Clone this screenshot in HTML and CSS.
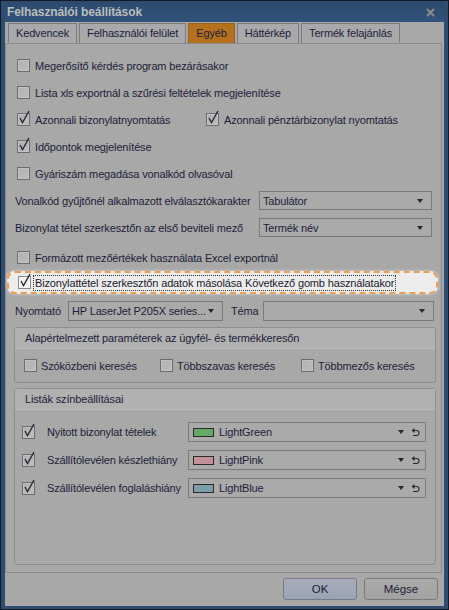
FILE: index.html
```html
<!DOCTYPE html>
<html>
<head>
  <title>Felhasználói beállítások</title>
  <link rel="stylesheet" href="styles.css">
</head>
<body>

  <div class="window">
    <div class="titlebar">
      <span class="title">Felhasználói beállítások</span>
      <svg class="close" width="9" height="9" viewBox="0 0 9 9"><path d="M1 1 L8 8 M8 1 L1 8" stroke="#8d8d8d" stroke-width="2"/></svg>
    </div>

    <div class="client">
      <div class="tabs">
        <div class="tab">Kedvencek</div>
        <div class="tab">Felhasználói felület</div>
        <div class="tab active">Egyéb</div>
        <div class="tab">Háttérkép</div>
        <div class="tab">Termék felajánlás</div>
      </div>

      <div class="tabpanel">
        <div class="row"><span class="cb"></span>Megerősítő kérdés program bezárásakor</div>
        <div class="row"><span class="cb"></span>Lista xls exportnál a szűrési feltételek megjelenítése</div>
        <div class="row">
          <div class="col"><span class="cb checked"></span>Azonnali bizonylatnyomtatás</div>
          <div class="col"><span class="cb checked"></span>Azonnali pénztárbizonylat nyomtatás</div>
        </div>
        <div class="row"><span class="cb checked"></span>Időpontok megjelenítése</div>
        <div class="row"><span class="cb"></span>Gyáriszám megadása vonalkód olvasóval</div>
        <div class="row field">
          <span class="flabel">Vonalkód gyűjtőnél alkalmazott elválasztókarakter</span>
          <div class="select wide">Tabulátor<span class="arrow"></span></div>
        </div>
        <div class="row field">
          <span class="flabel">Bizonylat tétel szerkesztőn az első beviteli mező</span>
          <div class="select wide">Termék név<span class="arrow"></span></div>
        </div>
        <div class="row gap-top"><span class="cb"></span>Formázott mezőértékek használata Excel exportnál</div>

        <div class="highlight">
          <span class="cb checked"></span><span class="focus">Bizonylattétel szerkesztőn adatok másolása Következő gomb használatakor</span>
        </div>

        <div class="row printer">
          <span class="plabel">Nyomtató</span>
          <div class="select printer-sel">HP LaserJet P205X series...<span class="arrow"></span></div>
          <span class="tlabel">Téma</span>
          <div class="select theme-sel"><span class="arrow"></span></div>
        </div>

        <div class="group search">
          <div class="group-head">Alapértelmezett paraméterek az ügyfél- és termékkeresőn</div>
          <div class="group-body">
            <div class="opt opt1"><span class="cb"></span>Szóközbeni keresés</div>
            <div class="opt opt2"><span class="cb"></span>Többszavas keresés</div>
            <div class="opt"><span class="cb"></span>Többmezős keresés</div>
          </div>
        </div>

        <div class="group colors">
          <div class="group-head">Listák színbeállításai</div>
          <div class="color-rows">
            <div class="color-row">
              <span class="cb checked"></span><span class="clabel">Nyitott bizonylat tételek</span>
              <div class="select color-sel"><span class="swatch green"></span>LightGreen<span class="arrow"></span>
                <svg class="reset" width="9" height="9" viewBox="0 0 9 9"><path d="M0.5 2.5 L3.5 0 V5 Z" fill="#2a2a35"/><path d="M3 2.5 H5.5 A2.5 2.5 0 0 1 5.5 7.5 H2" stroke="#2a2a35" stroke-width="1.1" fill="none"/></svg>
              </div>
            </div>
            <div class="color-row">
              <span class="cb checked"></span><span class="clabel">Szállítólevélen készlethiány</span>
              <div class="select color-sel"><span class="swatch pink"></span>LightPink<span class="arrow"></span>
                <svg class="reset" width="9" height="9" viewBox="0 0 9 9"><path d="M0.5 2.5 L3.5 0 V5 Z" fill="#2a2a35"/><path d="M3 2.5 H5.5 A2.5 2.5 0 0 1 5.5 7.5 H2" stroke="#2a2a35" stroke-width="1.1" fill="none"/></svg>
              </div>
            </div>
            <div class="color-row">
              <span class="cb checked"></span><span class="clabel">Szállítólevélen foglaláshiány</span>
              <div class="select color-sel"><span class="swatch blue"></span>LightBlue<span class="arrow"></span>
                <svg class="reset" width="9" height="9" viewBox="0 0 9 9"><path d="M0.5 2.5 L3.5 0 V5 Z" fill="#2a2a35"/><path d="M3 2.5 H5.5 A2.5 2.5 0 0 1 5.5 7.5 H2" stroke="#2a2a35" stroke-width="1.1" fill="none"/></svg>
              </div>
            </div>
          </div>
        </div>
      </div>

      <div class="buttons">
        <button class="btn default">OK</button>
        <button class="btn">Mégse</button>
      </div>
    </div>
  </div>

  <script>
    // draw the check marks into every checked box
    document.querySelectorAll(".cb.checked").forEach(box => {
      box.innerHTML = '<svg class="tick" width="14" height="16" viewBox="0 0 14 16"><path d="M3 9 L5.5 13.5 L12 2" stroke="#2a2a32" stroke-width="1.4" fill="none"/></svg>';
    });
  </script>

</body>
</html>
```

FILE: styles.css
```css
body {
  margin: 0;
  font-family: 'Liberation Sans', Arial, sans-serif;
  font-size: 11px;
  letter-spacing: -0.15px;
  color: #1d1d38;
  white-space: nowrap;
}
.window {
  width: 449px;
  height: 610px;
  box-sizing: border-box;
  background: #2f4d70;
  border: 1px solid #131a25;
  padding: 0 4px 3px 4px;
  display: flex;
  flex-direction: column;
}
.titlebar {
  height: 21px;
  display: flex;
  align-items: center;
  justify-content: space-between;
  padding: 0 9px 0 2px;
  background: linear-gradient(to bottom, #2c4a6c, #31537a);
}
.title {
  font-weight: bold;
  font-size: 12px;
  letter-spacing: -0.1px;
  color: #bcbcbc;
}
.close {
  margin-top: 1px;
}
.client {
  flex: 1;
  background: #a8a8a8;
  display: flex;
  flex-direction: column;
  padding-top: 1px;
}
.tabs {
  display: flex;
  gap: 2px;
  padding-left: 3px;
  height: 20px;
}
.tab {
  border: 1px solid #7c7c7f;
  border-bottom: none;
  padding: 0 7px;
  line-height: 19px;
  background: #a9a9ac;
}
.tab.active {
  background: #b6711f;
  border-color: #9a6020;
}
.tabpanel {
  height: 530px;
  box-sizing: border-box;
  margin-right: 2px;
  border: 1px solid #8b8b8b;
  padding: 8px 0 0 0;
}
.row {
  height: 27px;
  display: flex;
  align-items: center;
  padding-left: 11px;
}
.row.gap-top {
  margin-top: 3px;
}
.col {
  display: flex;
  align-items: center;
  width: 189px;
}
.cb {
  position: relative;
  width: 11px;
  height: 11px;
  border: 1px solid #6c6c6e;
  background: linear-gradient(to bottom right, #b0b0b2, #bdbdbf);
  box-shadow: inset 0 0 0 1px #c2c2c4;
  margin-right: 5px;
  flex: none;
}
.tick {
  position: absolute;
  left: -1px;
  top: -5px;
}
.field {
  padding-left: 9px;
}
.flabel {
  width: 244px;
}
.select {
  position: relative;
  height: 18px;
  box-sizing: border-box;
  border: 1px solid #7a7a7c;
  background: #aaaaab;
  display: flex;
  align-items: center;
  padding-left: 3px;
}
.arrow {
  position: absolute;
  right: 8px;
  top: 7px;
  border-left: 3.5px solid transparent;
  border-right: 3.5px solid transparent;
  border-top: 4px solid #26262e;
}
.select.wide {
  width: 173px;
  height: 19px;
}
.highlight {
  height: 23px;
  box-sizing: border-box;
  margin: 0 3px 0 1px;
  border: 2px dashed #ef9d4e;
  border-radius: 8px;
  background: #ededed;
  box-shadow: 0 0 3px rgba(255, 255, 255, 0.6);
  display: flex;
  align-items: center;
  padding-left: 9px;
  color: #1a1a2a;
}
.highlight .cb {
  background: #f4f4f4;
  box-shadow: none;
  border-color: #8a8a8a;
  margin-right: 3px;
}
.focus {
  outline: 1px dotted #333;
  padding: 0 1px;
  line-height: 14px;
}
.printer {
  margin-top: 3px;
  padding-left: 9px;
}
.plabel {
  width: 53px;
}
.printer-sel {
  width: 155px;
  height: 20px;
}
.tlabel {
  margin-left: 8px;
  width: 32px;
}
.theme-sel {
  width: 171px;
  height: 20px;
}
.group {
  margin: 3px 0 0 8px;
  width: 422px;
  box-sizing: border-box;
  border: 1px solid #8e8e8e;
  border-radius: 3px;
}
.group-head {
  height: 20px;
  line-height: 20px;
  padding-left: 10px;
  background: #b1b1b2;
  border-bottom: 1px solid #bcbcbc;
}
.search {
  height: 56px;
}
.group-body {
  display: flex;
  align-items: center;
  height: 33px;
  padding-left: 9px;
}
.opt {
  display: flex;
  align-items: center;
}
.opt .cb {
  margin-right: 4px;
}
.opt1 {
  width: 136px;
}
.opt2 {
  width: 141px;
}
.colors {
  margin-top: 5px;
  height: 177px;
}
.color-rows {
  padding: 8px 0 0 7px;
}
.color-row {
  height: 28px;
  display: flex;
  align-items: center;
}
.color-row .cb {
  margin-right: 12px;
}
.clabel {
  width: 141px;
}
.color-sel {
  width: 238px;
  height: 20px;
  padding-left: 4px;
}
.color-sel .arrow {
  right: 21px;
}
.reset {
  position: absolute;
  right: 5px;
  top: 5px;
}
.swatch {
  width: 19px;
  height: 7px;
  border: 1px solid #2a2a2a;
  margin-right: 5px;
}
.swatch.green {
  background: #66a966;
}
.swatch.pink {
  background: #c4909a;
}
.swatch.blue {
  background: #7c9eaa;
}
.buttons {
  display: flex;
  justify-content: flex-end;
  gap: 7px;
  padding: 5px 6px 0 0;
}
.btn {
  width: 74px;
  height: 22px;
  font-family: 'Liberation Sans', Arial, sans-serif;
  font-size: 11.5px;
  color: #1d1d38;
  border: 1px solid #7a7a7c;
  border-radius: 3px;
  background: linear-gradient(to bottom, #ababab, #a2a2a2);
}
.btn.default {
  background: linear-gradient(to bottom, #a9adbb, #9aa2b6);
  border-color: #777a84;
}
```
